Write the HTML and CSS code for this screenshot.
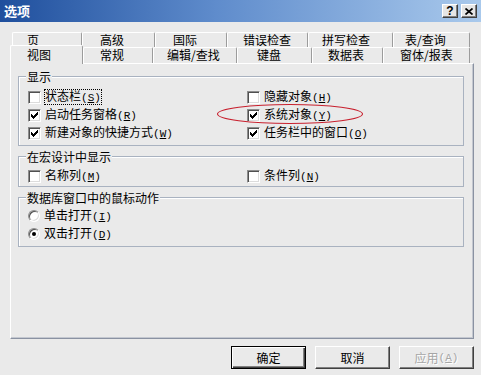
FILE: index.html
```html
<!DOCTYPE html>
<html lang="zh-CN">
<head>
<meta charset="utf-8">
<title>选项</title>
<link rel="stylesheet" href="styles.css">
</head>
<body>
<div class="window">
  <div class="titlebar">
    <span class="title">选项</span>
    <span class="tbtn help">?</span>
    <span class="tbtn close"><svg width="8" height="7" viewBox="0 0 8 7"><path d="M0.5 0.5 L7.5 6.5 M7.5 0.5 L0.5 6.5" stroke="#000" stroke-width="1.7" fill="none"/></svg></span>
  </div>
  <div class="main">
    <div class="tabs tabs-back">
      <div class="tab">页</div>
      <div class="tab">高级</div>
      <div class="tab">国际</div>
      <div class="tab">错误检查</div>
      <div class="tab">拼写检查</div>
      <div class="tab">表/查询</div>
    </div>
    <div class="tabs tabs-front">
      <div class="tab selected">视图</div>
      <div class="tab">常规</div>
      <div class="tab">编辑/查找</div>
      <div class="tab">键盘</div>
      <div class="tab">数据表</div>
      <div class="tab">窗体/报表</div>
    </div>
    <div class="panel">
      <div class="group g1">
        <div class="group-title">显示</div>
        <div class="grid">
          <div class="opt"><span class="cb"></span><span class="lbl focus">状态栏<span class="mn">(<u>S</u>)</span></span></div>
          <div class="opt"><span class="cb"></span><span class="lbl">隐藏对象<span class="mn">(<u>H</u>)</span></span></div>
          <div class="opt"><span class="cb"><svg viewBox="1 1 11 11" width="11" height="11"><path d="M3 5 L5 7 L9.5 2.5 V5.5 L5 10 L3 8 Z"/></svg></span><span class="lbl">启动任务窗格<span class="mn">(<u>R</u>)</span></span></div>
          <div class="opt"><span class="cb"><svg viewBox="1 1 11 11" width="11" height="11"><path d="M3 5 L5 7 L9.5 2.5 V5.5 L5 10 L3 8 Z"/></svg></span><span class="lbl">系统对象<span class="mn">(<u>Y</u>)</span></span></div>
          <div class="opt"><span class="cb"><svg viewBox="1 1 11 11" width="11" height="11"><path d="M3 5 L5 7 L9.5 2.5 V5.5 L5 10 L3 8 Z"/></svg></span><span class="lbl">新建对象的快捷方式<span class="mn">(<u>W</u>)</span></span></div>
          <div class="opt"><span class="cb"><svg viewBox="1 1 11 11" width="11" height="11"><path d="M3 5 L5 7 L9.5 2.5 V5.5 L5 10 L3 8 Z"/></svg></span><span class="lbl">任务栏中的窗口<span class="mn">(<u>O</u>)</span></span></div>
        </div>
      </div>
      <div class="group g2">
        <div class="group-title">在宏设计中显示</div>
        <div class="grid">
          <div class="opt"><span class="cb"></span><span class="lbl">名称列<span class="mn">(<u>M</u>)</span></span></div>
          <div class="opt"><span class="cb"></span><span class="lbl">条件列<span class="mn">(<u>N</u>)</span></span></div>
        </div>
      </div>
      <div class="group g3">
        <div class="group-title">数据库窗口中的鼠标动作</div>
        <div class="list">
          <div class="opt"><span class="rb"></span><span class="lbl">单击打开<span class="mn">(<u>I</u>)</span></span></div>
          <div class="opt"><span class="rb on"></span><span class="lbl">双击打开<span class="mn">(<u>D</u>)</span></span></div>
        </div>
      </div>
    </div>
    <div class="buttons">
      <div class="btn default">确定</div>
      <div class="btn">取消</div>
      <div class="btn disabled">应用<span class="mn">(<u>A</u>)</span></div>
    </div>
  </div>
  <svg class="mark" width="148" height="22" viewBox="0 0 148 22"><ellipse cx="74" cy="11" rx="72.5" ry="9.5" fill="none" stroke="#c8202e" stroke-width="1.1"/></svg>
</div>
</body>
</html>
```
FILE: styles.css
```css
html, body {
  margin: 0;
  padding: 0;
}
body {
  background: #eaeaea;
  font-family: "Noto Sans CJK SC", "Noto Sans", sans-serif;
  font-size: 12px;
  color: #000;
}
.window {
  position: relative;
  width: 481px;
  height: 375px;
  overflow: hidden;
  background: #eaeaea;
}
.titlebar {
  height: 22px;
  display: flex;
  align-items: center;
  padding: 0 4px;
  background: linear-gradient(90deg, #1f4f9d 0%, #5f8ccc 45%, #a9c9ec 100%);
}
.title {
  flex: 1;
  color: #fff;
  font-weight: bold;
  font-size: 13px;
  line-height: 22px;
}
.tbtn {
  width: 16px;
  height: 14px;
  box-sizing: border-box;
  display: flex;
  align-items: center;
  justify-content: center;
  background: #e6e6e6;
  border: 1px solid;
  border-color: #fff #404040 #404040 #fff;
  box-shadow: inset -1px -1px #808080;
  color: #000;
  font: bold 12px "Liberation Sans", sans-serif;
  line-height: 12px;
}
.tbtn + .tbtn {
  margin-left: 3px;
}
.main {
  padding: 10px 7px 0 10px;
}
.tabs {
  display: grid;
}
.tabs-back {
  margin-left: 2px;
  height: 15px;
  grid-template-columns: 70px 73px 72px 81px 85px 77px;
}
.tabs-front {
  height: 16px;
  grid-template-columns: 73px 70px 84px 75px 71px 87px;
}
.tab {
  box-sizing: border-box;
  border-top: 1px solid #fff;
  border-left: 1px solid #fff;
  border-right: 1px solid #9c9c9c;
  border-radius: 2px 2px 0 0;
  line-height: 14px;
  white-space: nowrap;
  background: #eaeaea;
}
.tabs-back .tab { line-height: 13px; }
.tabs-back .tab:nth-child(1) { padding-left: 14px; }
.tabs-back .tab:nth-child(2) { padding-left: 17px; }
.tabs-back .tab:nth-child(3) { padding-left: 17px; }
.tabs-back .tab:nth-child(4) { padding-left: 15px; }
.tabs-back .tab:nth-child(5) { padding-left: 13px; }
.tabs-back .tab:nth-child(6) { padding-left: 11px; }
.tabs-front .tab:nth-child(1) { padding-left: 16px; }
.tabs-front .tab:nth-child(2) { padding-left: 16px; }
.tabs-front .tab:nth-child(3) { padding-left: 13px; }
.tabs-front .tab:nth-child(4) { padding-left: 19px; }
.tabs-front .tab:nth-child(5) { padding-left: 15px; }
.tabs-front .tab:nth-child(6) { padding-left: 16px; }
.tab.selected {
  position: relative;
  z-index: 2;
  margin-top: -2px;
  margin-bottom: -1px;
  padding-top: 2px;
  line-height: 14px;
}
.panel {
  box-sizing: border-box;
  height: 276px;
  padding: 12px 9px 0 7px;
  border-top: 1px solid #fff;
  border-left: 1px solid #fff;
  border-right: 1px solid #8a92a2;
  border-bottom: 1px solid #8a92a2;
  box-shadow: inset -1px -1px #c4c8d0;
  display: flex;
  flex-direction: column;
}
.group {
  border: 1px solid #a9b2c0;
  box-shadow: inset 1px 1px #fff;
  display: flex;
  flex-direction: column;
  align-items: flex-start;
}
.group + .group {
  margin-top: 10px;
}
.group-title {
  margin: -7px 0 0 7px;
  padding: 0 1px;
  line-height: 14px;
  background: #eaeaea;
}
.g1 .grid { margin-top: 4px; }
.g1 { padding-bottom: 3px; }
.g2 .grid { margin-top: 3px; }
.g2 { padding-bottom: 1px; }
.g3 .list { margin-top: 2px; }
.g3 { padding-bottom: 3px; }
.grid {
  display: grid;
  grid-template-columns: 219px 1fr;
  padding-left: 9px;
  align-self: stretch;
}
.list {
  display: flex;
  flex-direction: column;
  padding-left: 9px;
}
.opt {
  height: 18px;
  display: flex;
  align-items: center;
}
.cb {
  width: 13px;
  height: 13px;
  box-sizing: border-box;
  flex: none;
  background: #fff;
  border: 1px solid;
  border-color: #8d8d8d #fff #fff #8d8d8d;
  box-shadow: inset 1px 1px #505050, inset -1px -1px #dcdcdc;
}
.cb svg {
  display: block;
  fill: #000;
  shape-rendering: crispEdges;
}
.rb {
  width: 12px;
  height: 12px;
  box-sizing: border-box;
  flex: none;
  border-radius: 50%;
  background: #fff;
  border: 1px solid;
  border-color: #8d8d8d #fff #fff #8d8d8d;
  box-shadow: inset 1px 1px #505050, inset -1px -1px #dcdcdc;
  display: flex;
  align-items: center;
  justify-content: center;
}
.rb.on::after {
  content: "";
  width: 4px;
  height: 4px;
  border-radius: 50%;
  background: #000;
}
.lbl {
  margin-left: 3px;
  border: 1px dotted transparent;
  line-height: 12px;
  white-space: nowrap;
}
.lbl.focus {
  border-color: #000;
}
.mn {
  font-family: "Liberation Mono", monospace;
  font-size: 11px;
}
.mn u {
  text-underline-offset: 1px;
}
.buttons {
  margin-top: 7px;
  display: flex;
  justify-content: flex-end;
  gap: 9px;
}
.btn {
  width: 75px;
  height: 23px;
  box-sizing: border-box;
  display: flex;
  align-items: center;
  justify-content: center;
  background: #eaeaea;
  border: 1px solid;
  border-color: #fff #404040 #404040 #fff;
  box-shadow: inset -1px -1px #808080;
}
.btn.default {
  border-color: #000;
  box-shadow: inset 1px 1px #fff, inset -1px -1px #404040, inset -2px -2px #808080;
}
.btn.disabled {
  color: #a6a6a6;
  text-shadow: 1px 1px #fff;
}
.mark {
  position: absolute;
  left: 216px;
  top: 103px;
}
```
